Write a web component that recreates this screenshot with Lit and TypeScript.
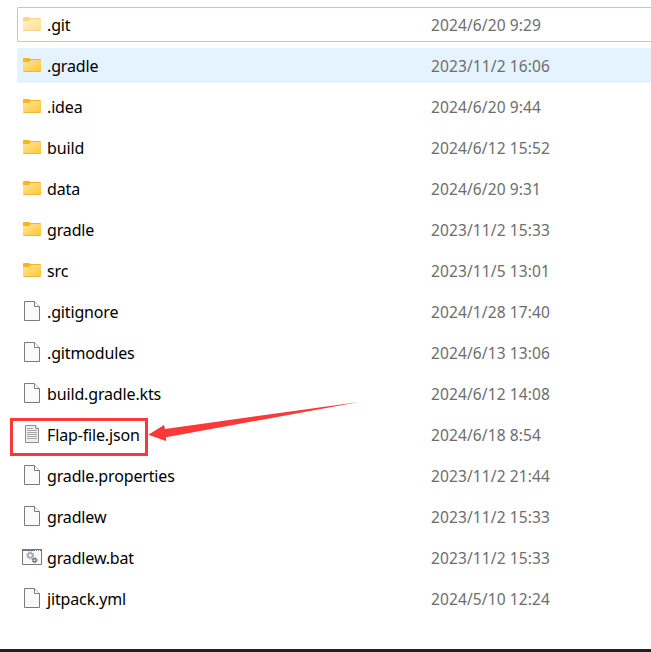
import { LitElement, html, css, svg } from "lit";
import { customElement, property } from "lit/decorators.js";
import { classMap } from "lit/directives/class-map.js";

type Kind = "folder" | "file" | "text" | "bat";
interface Entry { name: string; date: string; kind: Kind; state?: "focused" | "hovered"; }

const entries: Entry[] = [
  { name: ".git", date: "2024/6/20 9:29", kind: "folder", state: "focused" },
  { name: ".gradle", date: "2023/11/2 16:06", kind: "folder", state: "hovered" },
  { name: ".idea", date: "2024/6/20 9:44", kind: "folder" },
  { name: "build", date: "2024/6/12 15:52", kind: "folder" },
  { name: "data", date: "2024/6/20 9:31", kind: "folder" },
  { name: "gradle", date: "2023/11/2 15:33", kind: "folder" },
  { name: "src", date: "2023/11/5 13:01", kind: "folder" },
  { name: ".gitignore", date: "2024/1/28 17:40", kind: "file" },
  { name: ".gitmodules", date: "2024/6/13 13:06", kind: "file" },
  { name: "build.gradle.kts", date: "2024/6/12 14:08", kind: "file" },
  { name: "Flap-file.json", date: "2024/6/18 8:54", kind: "text" },
  { name: "gradle.properties", date: "2023/11/2 21:44", kind: "file" },
  { name: "gradlew", date: "2023/11/2 15:33", kind: "file" },
  { name: "gradlew.bat", date: "2023/11/2 15:33", kind: "bat" },
  { name: "jitpack.yml", date: "2024/5/10 12:24", kind: "file" },
];

const glyphs = {
  folder: svg`
    <defs><linearGradient id="g" x1="0" y1="0" x2="1" y2="1">
      <stop offset="0" stop-color="#ffe6a0"/><stop offset="1" stop-color="#ffc52e"/>
    </linearGradient></defs>
    <path d="M1 4a1 1 0 0 1 1-1h5l1.4 1H18a1 1 0 0 1 1 1v4H1z" fill="#f8b51c"/>
    <path d="M1 7h6l2-2h10v11a1 1 0 0 1-1 1H2a1 1 0 0 1-1-1z" fill="url(#g)"/>
    <path d="M1.5 16.5h17" stroke="#eeb640"/>`,
  file: svg`
    <path d="M2.5 .5h10l5 5v14h-15z" fill="#fafafa" stroke="#7b7b7b"/>
    <path d="M12.5 .5v5h5" fill="#fff" stroke="#7b7b7b"/>`,
  text: svg`
    <path d="M3.5 1.5h10l3 3v14h-13z" fill="#f0f0f0" stroke="#8c8c8c"/>
    <path d="M13.5 1.5v3h3" fill="#fff" stroke="#8c8c8c"/>
    <path d="M5 4.5h6M5 6.5h10M5 8.5h10M5 10.5h10M5 12.5h10M5 14.5h10" stroke="#a6a6a6"/>`,
  bat: svg`
    <path d="M.5 2.5h19v15H.5z" fill="#fafafa" stroke="#777"/>
    <path d="M0 3h20" stroke="#777" stroke-width="2"/>
    <path d="M13 3.5h1M15 3.5h1M17 3.5h1" stroke="#fff"/>
    <circle cx="8.3" cy="8.3" r="2.3" fill="none" stroke="#9aa8b6" stroke-width="1.5"/>
    <circle cx="8.3" cy="8.3" r="3.5" fill="none" stroke="#9aa8b6" stroke-width="1.2" stroke-dasharray="1.3 1.45"/>
    <circle cx="12.6" cy="13.2" r="1.6" fill="none" stroke="#5f6c75" stroke-width="1.3"/>
    <circle cx="12.6" cy="13.2" r="2.5" fill="none" stroke="#5f6c75" stroke-dasharray="1 .96"/>`,
};

@customElement("file-row")
class FileRow extends LitElement {
  @property({ attribute: false }) entry!: Entry;

  static styles = css`
    :host { display: block; }
    .row {
      box-sizing: border-box; height: 35px; display: grid;
      grid-template-columns: 20px 389px 1fr;
      padding-left: 4px; border: 1px solid transparent; border-right: 0;
      border-radius: 2px 0 0 2px; white-space: nowrap;
    }
    .focused { border-color: #99d1ff; }
    .hovered { background: #e5f3ff; border-color: #e5f3ff; }
    .icon { display: block; width: 20px; height: 20px; margin-top: 6px; }
    .focused .icon { opacity: .55; }
    .name, .date { font: 16px/32px "Noto Sans", "Open Sans", sans-serif; padding-top: 1px; }
    .name { color: #000; padding-left: 5px; letter-spacing: -.15px; }
    .date { color: #6d6d6d; font-size: 15.5px; letter-spacing: .12px; }
  `;

  render() {
    const { name, date, kind, state } = this.entry;
    return html`<div class=${classMap({ row: true, focused: state === "focused", hovered: state === "hovered" })}>
      <svg class="icon" viewBox="0 0 20 20">${glyphs[kind]}</svg>
      <span class="name">${name}</span><span class="date">${date}</span>
    </div>`;
  }
}

@customElement("app-root")
class AppRoot extends LitElement {
  static styles = css`
    :host {
      display: flex; flex-direction: column; position: relative;
      box-sizing: border-box; height: 652px; background: #fff; overflow: hidden;
    }
    .list { flex: 1; display: flex; flex-direction: column; gap: 6px; padding: 7px 0 0 17px; }
    .bar { height: 3px; background: #202124; }
    .marks { position: absolute; left: 0; top: 400px; width: 370px; height: 60px; }
  `;

  render() {
    return html`
      <div class="list">${entries.map((e) => html`<file-row .entry=${e}></file-row>`)}</div>
      <div class="bar"></div>
      <svg class="marks" viewBox="0 400 370 60">
        <rect x="11.5" y="419.5" width="135" height="35" fill="none" stroke="#fc3838" stroke-width="3"/>
        <path d="M148.3 434.7 164 425l1 4L359 402 166 437.3V441z" fill="#fc3838"/>
      </svg>`;
  }
}
